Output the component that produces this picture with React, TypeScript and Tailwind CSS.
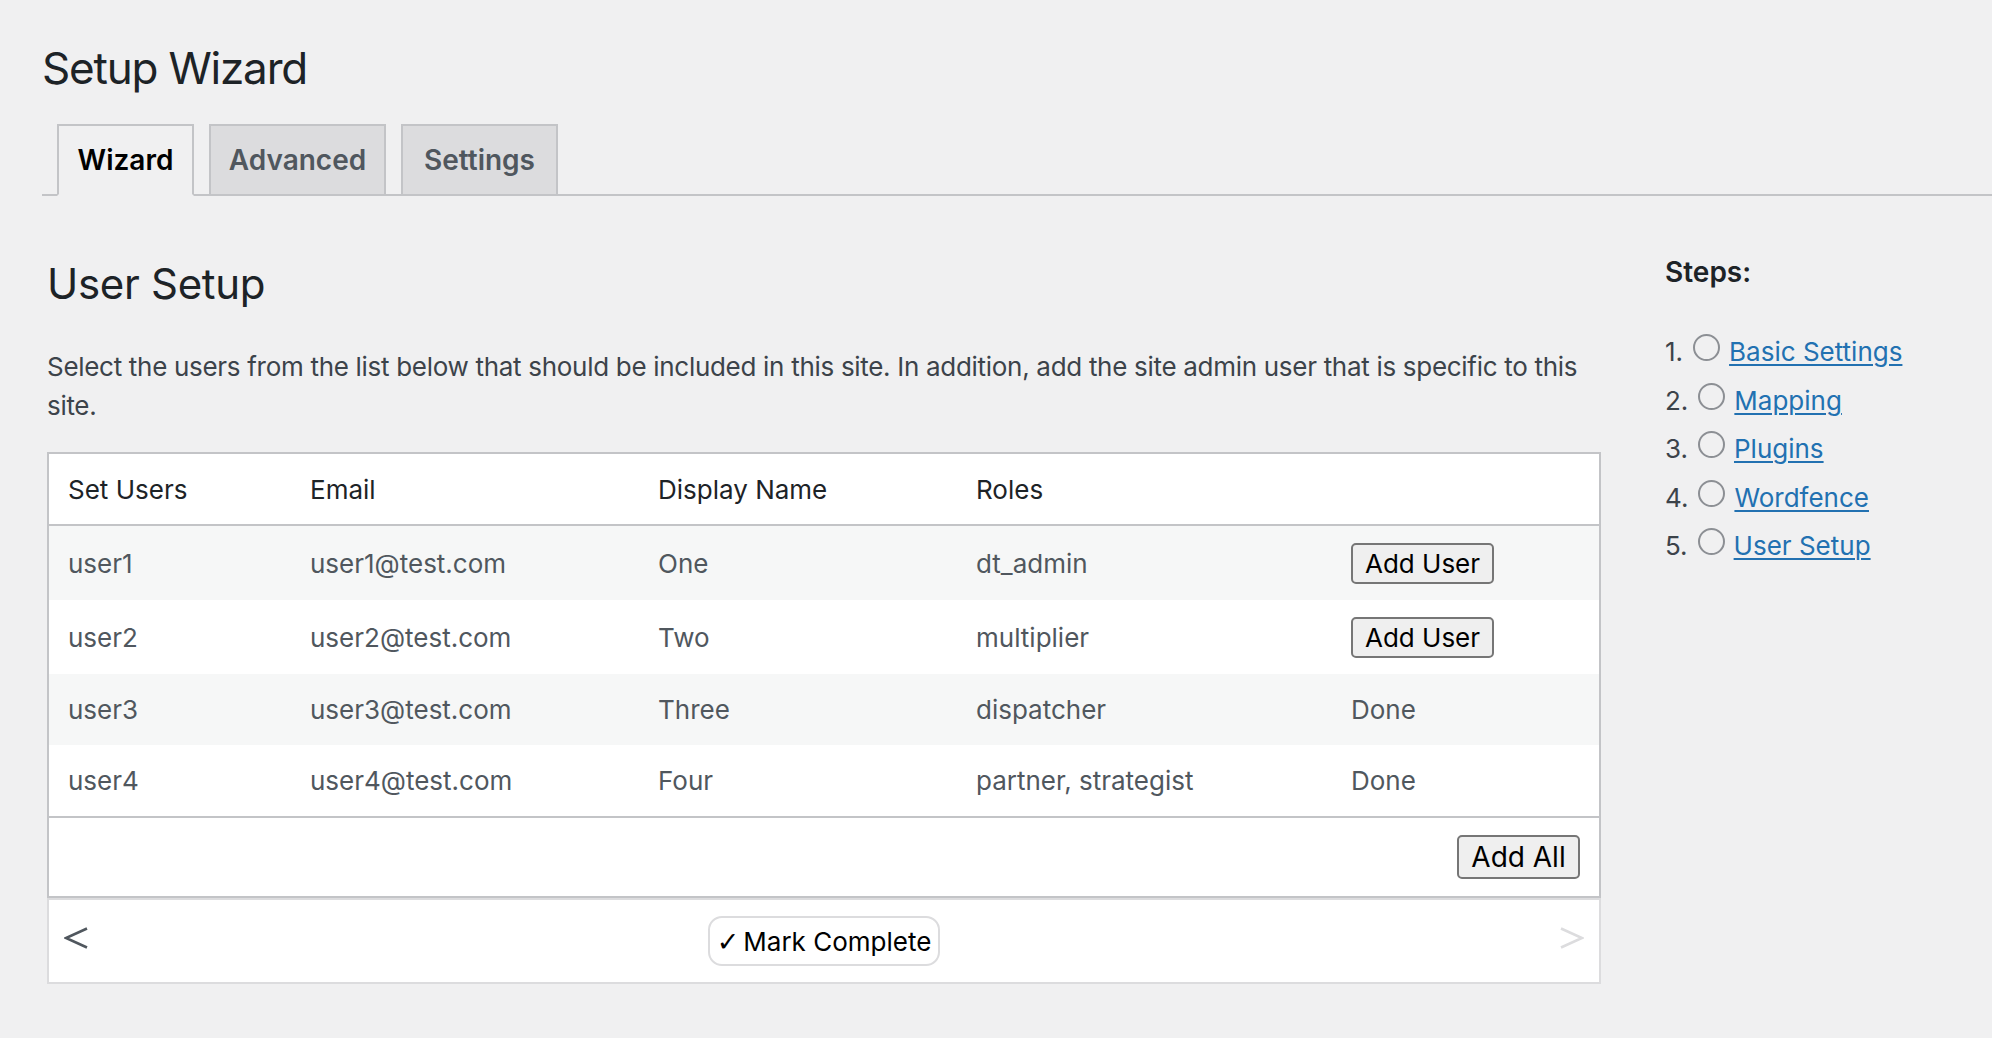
import React from 'react';

interface UserRow {
  login: string;
  email: string;
  name: string;
  roles: string;
  added: boolean;
  rowClass: string;
}

const users: UserRow[] = [
  { login: 'user1', email: 'user1@test.com', name: 'One', roles: 'dt_admin', added: false, rowClass: 'h-[75px] bg-[#f6f7f7]' },
  { login: 'user2', email: 'user2@test.com', name: 'Two', roles: 'multiplier', added: false, rowClass: 'h-[74px] bg-white' },
  { login: 'user3', email: 'user3@test.com', name: 'Three', roles: 'dispatcher', added: true, rowClass: 'h-[71px] bg-[#f6f7f7]' },
  { login: 'user4', email: 'user4@test.com', name: 'Four', roles: 'partner, strategist', added: true, rowClass: 'h-[72px] bg-white' },
];

const steps = ['Basic Settings', 'Mapping', 'Plugins', 'Wordfence', 'User Setup'];

const tabs = [
  { label: 'Wizard', active: true, width: 'w-[137px]' },
  { label: 'Advanced', active: false, width: 'w-[177px]' },
  { label: 'Settings', active: false, width: 'w-[157px]' },
];

const App: React.FC = () => {
  return (
    <div className="min-h-screen bg-[#f0f0f1] pl-[42px] pt-[39px] font-['Inter','Liberation_Sans',sans-serif] text-[#3c434a]">
      <h1 className="text-[44px] leading-[58px] tracking-[-1.2px] text-[#1d2327]">Setup Wizard</h1>

      {/* tabs */}
      <div className="mt-[27px] flex border-b-2 border-[#c3c4c7]">
        {tabs.map((tab) => (
          <div
            key={tab.label}
            className={`ml-[15px] -mb-[2px] flex ${tab.width} justify-center border-2 py-[10px] text-[28px] font-semibold leading-[48px] ${
              tab.active
                ? 'border-[#c3c4c7] border-b-[#f0f0f1] bg-[#f0f0f1] text-black'
                : 'border-[#c3c4c7] bg-[#dcdcde] text-[#50575e]'
            }`}
          >
            {tab.label}
          </div>
        ))}
      </div>

      <div className="flex">
        {/* main column */}
        <div className="ml-[5px] w-[1554px] shrink-0">
          <h2 className="mt-[62px] text-[42px] leading-[52px] tracking-[-0.3px] text-[#1d2327]">User Setup</h2>
          <p className="mt-[37px] text-[26px] leading-[39px] tracking-[-0.3px] text-[#3c434a]">
            Select the users from the list below that should be included in this site. In addition, add the site admin user that is specific to this site.
          </p>

          <div className="mt-[27px] border-2 border-[#c3c4c7] bg-white">
            <table className="w-full table-fixed text-left text-[26px]">
              <colgroup>
                <col className="w-[241px]" />
                <col className="w-[348px]" />
                <col className="w-[318px]" />
                <col className="w-[375px]" />
                <col />
              </colgroup>
              <thead>
                <tr className="h-[71px] border-b-2 border-[#c3c4c7] text-[#1d2327]">
                  <th className="pl-[19px] font-normal">Set Users</th>
                  <th className="pl-[20px] font-normal">Email</th>
                  <th className="pl-[20px] font-normal">Display Name</th>
                  <th className="pl-[20px] font-normal">Roles</th>
                  <th />
                </tr>
              </thead>
              <tbody className="text-[#50575e]">
                {users.map((u) => (
                  <tr key={u.login} className={u.rowClass}>
                    <td className="pl-[19px]">{u.login}</td>
                    <td className="pl-[20px]">{u.email}</td>
                    <td className="pl-[20px]">{u.name}</td>
                    <td className="pl-[20px]">{u.roles}</td>
                    <td className="pl-[20px]">
                      {u.added ? (
                        'Done'
                      ) : (
                        <button className="flex h-[41px] w-[143px] items-center justify-center rounded-[5px] border-2 border-[#767676] bg-[#efefef] text-[26px] text-black">
                          Add User
                        </button>
                      )}
                    </td>
                  </tr>
                ))}
              </tbody>
              <tfoot>
                <tr className="h-[79px] border-t-2 border-[#c3c4c7]">
                  <td colSpan={5} className="pr-[19px]">
                    <div className="flex justify-end">
                      <button className="flex h-[44px] w-[123px] items-center justify-center rounded-[5px] border-2 border-[#767676] bg-[#efefef] text-[28px] text-black">
                        Add All
                      </button>
                    </div>
                  </td>
                </tr>
              </tfoot>
            </table>
          </div>

          {/* step navigation */}
          <div className="grid h-[86px] grid-cols-[1fr_auto_1fr] items-center border-2 border-[#dcdcde] bg-white px-[15px]">
            <div className="flex items-center">
              <svg width="25" height="22" viewBox="0 0 25 22" className="-mt-[6px] text-[#50575e]">
                <polyline points="23,1.5 2,11 23,20.5" fill="none" stroke="currentColor" strokeWidth="2.6" />
              </svg>
            </div>
            <button className="flex h-[50px] w-[232px] items-center justify-center gap-[4px] rounded-[14px] border-2 border-[#dcdcde] bg-white text-[26px] text-black">
              <span className="font-['DejaVu_Sans',sans-serif] text-[27px] leading-none">✓</span>
              <span>Mark Complete</span>
            </button>
            <div className="flex items-center justify-end">
              <svg width="25" height="22" viewBox="0 0 25 22" className="-mt-[6px] text-[#dcdcde]">
                <polyline points="2,1.5 23,11 2,20.5" fill="none" stroke="currentColor" strokeWidth="2.6" />
              </svg>
            </div>
          </div>
        </div>

        {/* sidebar */}
        <div className="ml-[64px] flex-1">
          <h3 className="mt-[58px] text-[28px] font-semibold leading-[36px] text-[#1d2327]">Steps:</h3>
          <ol className="mt-[38px] text-[26px] text-[#3c434a]">
            {steps.map((step, i) => (
              <li key={step} className="flex items-baseline leading-[48.5px]">
                <span>{i + 1}.</span>
                <span className="ml-[10px] mr-[9px] inline-block h-[27px] w-[27px] rounded-full border-2 border-[#8c8f94]" />
                <a href="#" className="text-[#2271b1] underline decoration-2 underline-offset-[3px]">
                  {step}
                </a>
              </li>
            ))}
          </ol>
        </div>
      </div>
    </div>
  );
};

export default App;
